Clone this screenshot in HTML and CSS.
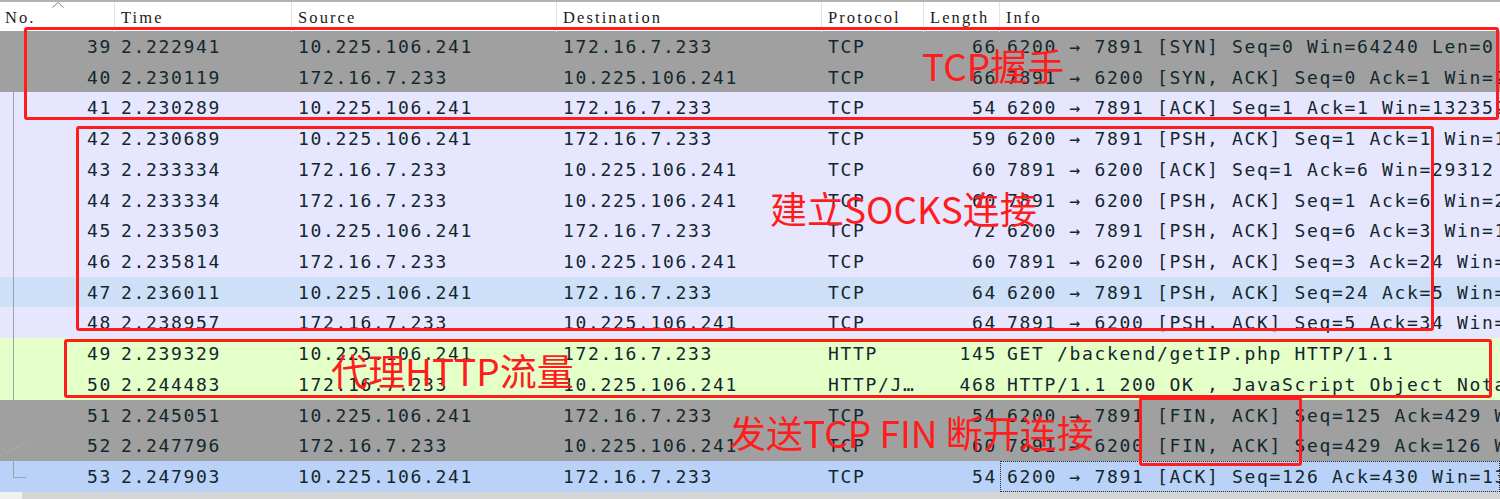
FILE: index.html
```html
<!DOCTYPE html>
<html lang="zh-CN">
<head>
<meta charset="utf-8">
<title>Packet list</title>
<link rel="stylesheet" href="styles.css">
</head>
<body>
<div class="pane">
  <div class="header">
    <div class="hcell num-h">No.<svg class="sort" width="14" height="8" viewBox="0 0 14 8"><path d="M1.5 6.5 L7 1.5 L12.5 6.5" fill="none" stroke="#7f7f7f" stroke-width="1"/></svg></div>
    <div class="hcell">Time</div>
    <div class="hcell">Source</div>
    <div class="hcell">Destination</div>
    <div class="hcell">Protocol</div>
    <div class="hcell">Length</div>
    <div class="hcell last">Info</div>
  </div>
  <div class="rows">
    <div class="row syn"><span class="c num">39</span><span class="c">2.222941</span><span class="c">10.225.106.241</span><span class="c">172.16.7.233</span><span class="c">TCP</span><span class="c len">66</span><span class="c info">6200 → 7891 [SYN] Seq=0 Win=64240 Len=0 MSS=1460 WS=256 SACK_PERM=1</span></div>
    <div class="row syn"><span class="c num">40</span><span class="c">2.230119</span><span class="c">172.16.7.233</span><span class="c">10.225.106.241</span><span class="c">TCP</span><span class="c len">66</span><span class="c info">7891 → 6200 [SYN, ACK] Seq=0 Ack=1 Win=29200 Len=0 MSS=1460</span></div>
    <div class="row tcp"><span class="c num">41</span><span class="c">2.230289</span><span class="c">10.225.106.241</span><span class="c">172.16.7.233</span><span class="c">TCP</span><span class="c len">54</span><span class="c info">6200 → 7891 [ACK] Seq=1 Ack=1 Win=132352 Len=0</span></div>
    <div class="row tcp"><span class="c num">42</span><span class="c">2.230689</span><span class="c">10.225.106.241</span><span class="c">172.16.7.233</span><span class="c">TCP</span><span class="c len">59</span><span class="c info">6200 → 7891 [PSH, ACK] Seq=1 Ack=1 Win=132352 Len=5</span></div>
    <div class="row tcp"><span class="c num">43</span><span class="c">2.233334</span><span class="c">172.16.7.233</span><span class="c">10.225.106.241</span><span class="c">TCP</span><span class="c len">60</span><span class="c info">7891 → 6200 [ACK] Seq=1 Ack=6 Win=29312 Len=0</span></div>
    <div class="row tcp"><span class="c num">44</span><span class="c">2.233334</span><span class="c">172.16.7.233</span><span class="c">10.225.106.241</span><span class="c">TCP</span><span class="c len">60</span><span class="c info">7891 → 6200 [PSH, ACK] Seq=1 Ack=6 Win=29312 Len=2</span></div>
    <div class="row tcp"><span class="c num">45</span><span class="c">2.233503</span><span class="c">10.225.106.241</span><span class="c">172.16.7.233</span><span class="c">TCP</span><span class="c len">72</span><span class="c info">6200 → 7891 [PSH, ACK] Seq=6 Ack=3 Win=132352 Len=18</span></div>
    <div class="row tcp"><span class="c num">46</span><span class="c">2.235814</span><span class="c">172.16.7.233</span><span class="c">10.225.106.241</span><span class="c">TCP</span><span class="c len">60</span><span class="c info">7891 → 6200 [PSH, ACK] Seq=3 Ack=24 Win=29312 Len=2</span></div>
    <div class="row hover"><span class="c num">47</span><span class="c">2.236011</span><span class="c">10.225.106.241</span><span class="c">172.16.7.233</span><span class="c">TCP</span><span class="c len">64</span><span class="c info">6200 → 7891 [PSH, ACK] Seq=24 Ack=5 Win=132352 Len=10</span></div>
    <div class="row tcp"><span class="c num">48</span><span class="c">2.238957</span><span class="c">172.16.7.233</span><span class="c">10.225.106.241</span><span class="c">TCP</span><span class="c len">64</span><span class="c info">7891 → 6200 [PSH, ACK] Seq=5 Ack=34 Win=29312 Len=10</span></div>
    <div class="row http"><span class="c num">49</span><span class="c">2.239329</span><span class="c">10.225.106.241</span><span class="c">172.16.7.233</span><span class="c">HTTP</span><span class="c len">145</span><span class="c info">GET /backend/getIP.php HTTP/1.1 </span></div>
    <div class="row http"><span class="c num">50</span><span class="c">2.244483</span><span class="c">172.16.7.233</span><span class="c">10.225.106.241</span><span class="c">HTTP/J…</span><span class="c len">468</span><span class="c info">HTTP/1.1 200 OK , JavaScript Object Notation (application/json)</span></div>
    <div class="row syn"><span class="c num">51</span><span class="c">2.245051</span><span class="c">10.225.106.241</span><span class="c">172.16.7.233</span><span class="c">TCP</span><span class="c len">54</span><span class="c info">6200 → 7891 [FIN, ACK] Seq=125 Ack=429 Win=131840 Len=0</span></div>
    <div class="row syn"><span class="c num">52</span><span class="c">2.247796</span><span class="c">172.16.7.233</span><span class="c">10.225.106.241</span><span class="c">TCP</span><span class="c len">60</span><span class="c info">7891 → 6200 [FIN, ACK] Seq=429 Ack=126 Win=30336 Len=0</span></div>
    <div class="row selected"><span class="c num">53</span><span class="c">2.247903</span><span class="c">10.225.106.241</span><span class="c">172.16.7.233</span><span class="c">TCP</span><span class="c len">54</span><span class="c info focus">6200 → 7891 [ACK] Seq=126 Ack=430 Win=131840 Len=0</span></div>
  </div>
  <div class="hscroll"><div class="thumb"></div></div>

  <svg class="tree" width="30" height="499" viewBox="0 0 30 499">
    <path d="M13.5 48 H25 M13.5 48 V477.5 H26" fill="none" stroke="#98a2a8" stroke-width="1"/>
    <path d="M2 448 L7 453 L26 442" fill="none" stroke="#a7adb1" stroke-width="1"/>
  </svg>

  <div class="mark m1"></div>
  <div class="mark m2"></div>
  <div class="mark m3"></div>
  <div class="mark m4"></div>
  <div class="note n1">TCP握手</div>
  <div class="note n2">建立SOCKS连接</div>
  <div class="note n3">代理HTTP流量</div>
  <div class="note n4">发送TCP FIN 断开连接</div>
</div>
</body>
</html>
```
FILE: styles.css
```css
html, body {
  margin: 0;
  padding: 0;
  background: #ffffff;
}

.pane {
  position: relative;
  width: 1500px;
  height: 499px;
  overflow: hidden;
  display: flex;
  flex-direction: column;
}

.header {
  display: grid;
  grid-template-columns: 115px 177px 265px 265px 102px 76px 500px;
  height: 31px;
  box-sizing: border-box;
  border-top: 2px solid #b2b2b2;
  background: #ffffff;
  flex: none;
}

.hcell {
  position: relative;
  font-family: "Liberation Serif", "DejaVu Serif", serif;
  font-size: 16.5px;
  letter-spacing: 2.1px;
  color: #1c1c1c;
  line-height: 29px;
  padding-top: 1px;
  padding-left: 6px;
  border-right: 1px solid #e3e3e3;
  white-space: nowrap;
  overflow: hidden;
}

.hcell.num-h {
  padding-left: 5px;
  overflow: visible;
}

.hcell.last {
  border-right: none;
}

.sort {
  position: absolute;
  left: 51px;
  top: -1px;
}

.rows {
  display: grid;
  grid-auto-rows: 30.73px;
  flex: none;
}

.row {
  display: grid;
  grid-template-columns: 115px 177px 265px 265px 102px 76px 500px;
  font-family: "DejaVu Sans Mono", monospace;
  font-size: 18px;
  letter-spacing: 1.66px;
  color: #12272e;
  line-height: 30.73px;
}

.c {
  display: block;
  padding-left: 6px;
  padding-top: 2px;
  line-height: 28.73px;
  white-space: nowrap;
  overflow: hidden;
}

.c.num {
  text-align: right;
  padding-left: 0;
  padding-right: 3px;
}

.c.len {
  text-align: right;
  padding-left: 0;
  padding-right: 3px;
}

.c.info {
  padding-left: 7px;
}

.c.focus {
  outline: 1px dotted #2a2a2a;
  outline-offset: -1px;
}

.syn { background: #a0a0a0; }
.tcp { background: #e7e6ff; }
.hover { background: #cde0f8; }
.http { background: #e4ffc7; }
.selected { background: #bad2f7; }

.hscroll {
  flex: 1;
  background: #f0f0f0;
  display: flex;
  padding-left: 22px;
}

.thumb {
  flex: 1;
  background: #d6d6d6;
}

.tree {
  position: absolute;
  left: 0;
  top: 0;
}

.mark {
  position: absolute;
  box-sizing: border-box;
  border: 3px solid #ff1c1c;
  border-radius: 3px;
}

.m1 { left: 24px; top: 27px; width: 1475px; height: 93px; }
.m2 { left: 76px; top: 126px; width: 1358px; height: 205px; }
.m3 { left: 64px; top: 339px; width: 1428px; height: 59px; }
.m4 { left: 1139px; top: 397px; width: 163px; height: 69px; }

.note {
  position: absolute;
  font-family: "Noto Sans CJK SC", "Noto Sans", sans-serif;
  font-size: 37px;
  line-height: 1;
  color: #ff1c1c;
  white-space: nowrap;
}

.n1 { left: 922px; top: 47px; }
.n2 { left: 770px; top: 190px; }
.n3 { left: 331px; top: 352px; }
.n4 { left: 729px; top: 414px; }
```
